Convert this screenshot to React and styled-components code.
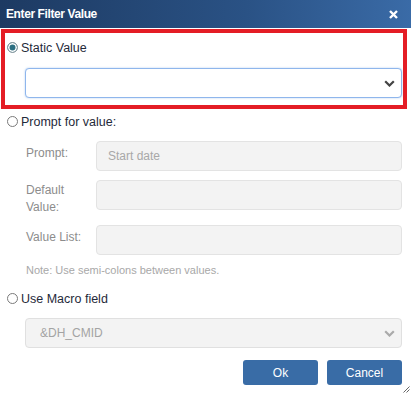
import React, { useState } from "react";
import { styled, createGlobalStyle } from "styled-components";

const GlobalStyle = createGlobalStyle`
  html, body {
    margin: 0;
    padding: 0;
    background: #ffffff;
  }
  body {
    font-family: "Liberation Sans", Arial, sans-serif;
    font-size: 12px;
    color: #222;
  }
`;

const Chevron = ({ color }) => (
  <svg width="11" height="7" viewBox="0 0 11 7">
    <path d="M1.2 1.2 L5.5 5.5 L9.8 1.2" fill="none" stroke={color} strokeWidth="2.2" />
  </svg>
);

const CloseIcon = () => (
  <svg width="9" height="9" viewBox="0 0 9 9">
    <path d="M1 1 L8 8 M8 1 L1 8" stroke="#fff" strokeWidth="2.4" />
  </svg>
);

const App = () => {
  const [mode, setMode] = useState("static");

  return (
    <Dialog>
      <GlobalStyle />
      <TitleBar>
        <Title>Enter Filter Value</Title>
        <CloseButton>
          <CloseIcon />
        </CloseButton>
      </TitleBar>

      <Content>
        <Highlight>
          <RadioRow onClick={() => setMode("static")}>
            <Radio $checked={mode === "static"} />
            <RadioLabel>Static Value</RadioLabel>
          </RadioRow>
          <SelectBox $active>
            <span />
            <Chevron color="#444" />
          </SelectBox>
        </Highlight>

        <Section>
          <RadioRow onClick={() => setMode("prompt")}>
            <Radio $checked={mode === "prompt"} />
            <RadioLabel>Prompt for value:</RadioLabel>
          </RadioRow>

          <Fields>
            <FieldLabel>Prompt:</FieldLabel>
            <Input>Start date</Input>
            <FieldLabel $top={2}>
              Default
              <br />
              Value:
            </FieldLabel>
            <Input />
            <FieldLabel>Value List:</FieldLabel>
            <Input />
          </Fields>
          <Note>Note: Use semi-colons between values.</Note>

          <RadioRow $gap={13} onClick={() => setMode("macro")}>
            <Radio $checked={mode === "macro"} />
            <RadioLabel>Use Macro field</RadioLabel>
          </RadioRow>
          <SelectBox>
            <SelectValue>&amp;DH_CMID</SelectValue>
            <Chevron color="#aaa" />
          </SelectBox>

          <Buttons>
            <Button>Ok</Button>
            <Button>Cancel</Button>
          </Buttons>
        </Section>
      </Content>

      <Grip>
        <svg width="7" height="7" viewBox="0 0 7 7">
          <path d="M0.5 6.5 L6.5 0.5 M3.5 6.5 L6.5 3.5" stroke="#666" strokeWidth="1" />
        </svg>
      </Grip>
    </Dialog>
  );
};

export default App;

const Dialog = styled.div`
  position: relative;
  width: 411px;
  height: 394px;
  background: #fff;
  display: flex;
  flex-direction: column;
  overflow: hidden;
`;

const TitleBar = styled.div`
  height: 28px;
  flex-shrink: 0;
  display: flex;
  align-items: center;
  justify-content: space-between;
  padding: 0 13px 0 6px;
  background: linear-gradient(90deg, #1d3a62 0%, #2a5285 60%, #3a6ba7 100%);
`;

const Title = styled.div`
  color: #fff;
  font-weight: bold;
  font-size: 12px;
  letter-spacing: -0.4px;
`;

const CloseButton = styled.div`
  display: flex;
  align-items: center;
  cursor: pointer;
`;

const Content = styled.div`
  padding: 1px 4px 0 1px;
  display: flex;
  flex-direction: column;
`;

const Highlight = styled.div`
  border: 4px solid #e41d25;
  padding: 6px 1px 7px 2px;
  display: flex;
  flex-direction: column;
  gap: 12px;
`;

const Section = styled.div`
  padding: 4px 5px 0 6px;
  display: flex;
  flex-direction: column;
`;

const RadioRow = styled.label`
  display: flex;
  align-items: center;
  gap: 3px;
  height: 17px;
  margin-top: ${(p) => p.$gap || 0}px;
  cursor: pointer;
`;

const Radio = styled.span`
  width: 11px;
  height: 11px;
  box-sizing: border-box;
  border-radius: 50%;
  border: 1px solid ${(p) => (p.$checked ? "#8a9aa0" : "#7a7a7a")};
  background: ${(p) => (p.$checked ? "#2c6f82" : "#fff")};
  box-shadow: ${(p) => (p.$checked ? "inset 0 0 0 1.5px #fff" : "none")};
  flex-shrink: 0;
`;

const RadioLabel = styled.span`
  font-size: 12.5px;
  color: #1f2a3a;
`;

const SelectBox = styled.div`
  height: 30px;
  box-sizing: border-box;
  margin-left: 18px;
  margin-top: ${(p) => (p.$active ? "0" : "11px")};
  display: flex;
  align-items: center;
  justify-content: space-between;
  padding: 0 6px 0 14px;
  border-radius: 4px;
  border: 1px solid ${(p) => (p.$active ? "#8fb6ec" : "#e0e0e0")};
  background: ${(p) => (p.$active ? "#fff" : "#f3f3f3")};
  box-shadow: ${(p) => (p.$active ? "0 0 2px rgba(110, 160, 230, 0.55)" : "none")};
`;

const SelectValue = styled.span`
  color: #a3a3a3;
  font-size: 12px;
`;

const Fields = styled.div`
  margin-top: 11px;
  margin-left: 19px;
  display: grid;
  grid-template-columns: 70px 1fr;
  row-gap: 9px;
`;

const FieldLabel = styled.div`
  color: #8c8c8c;
  font-size: 12px;
  line-height: 17px;
  padding-top: ${(p) => (p.$top !== undefined ? p.$top : 4)}px;
`;

const Input = styled.div`
  height: 30px;
  box-sizing: border-box;
  border: 1px solid #e3e3e3;
  border-radius: 4px;
  background: #f3f3f3;
  color: #a8a8a8;
  font-size: 12px;
  display: flex;
  align-items: center;
  padding-left: 11px;
`;

const Note = styled.div`
  margin: 9px 0 0 19px;
  color: #a8a8a8;
  font-size: 11px;
  line-height: 13px;
`;

const Buttons = styled.div`
  display: flex;
  justify-content: flex-end;
  gap: 9px;
  margin-top: 12px;
`;

const Button = styled.button`
  width: 75px;
  height: 25px;
  border: none;
  border-radius: 3px;
  background: #396ca6;
  color: #fff;
  font-family: "Liberation Sans", Arial, sans-serif;
  font-size: 12px;
  cursor: pointer;
  padding: 0;
`;

const Grip = styled.div`
  position: absolute;
  right: 1px;
  bottom: 1px;
  display: flex;
`;
